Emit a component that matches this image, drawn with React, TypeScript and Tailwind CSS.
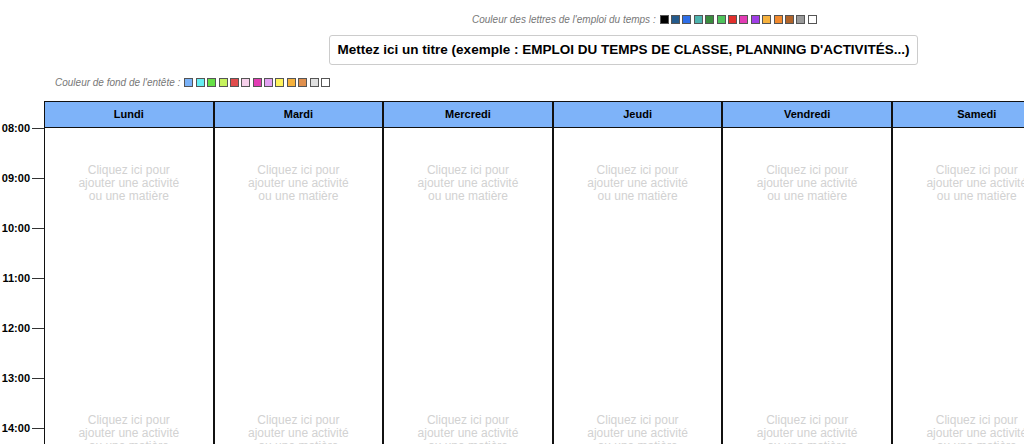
const letterColors = [
  '#000000', '#245a8c', '#2f6fe8', '#4db3ad', '#3a8c3e', '#4fc45c', '#e2302c',
  '#e23cb4', '#a03ee6', '#f6b23e', '#f28a2e', '#b0642a', '#9a9a9a', '#ffffff',
];

const headerColors = [
  '#7ab2f8', '#66eef2', '#66e046', '#c6f25e', '#e04c4c', '#f6d0ea', '#e23cb4',
  '#e2a2f2', '#fff45c', '#f6b23e', '#e0904e', '#e0e0e0', '#ffffff',
];

const days = ['Lundi', 'Mardi', 'Mercredi', 'Jeudi', 'Vendredi', 'Samedi'];
const hours = ['08:00', '09:00', '10:00', '11:00', '12:00', '13:00', '14:00', '15:00'];

function Swatches({ colors }: { colors: string[] }) {
  return (
    <div className="flex items-center gap-[2.4px]">
      {colors.map((c, i) => (
        <span
          key={i}
          className="block w-[9px] h-[9px] border border-[#555]"
          style={{ backgroundColor: c }}
        />
      ))}
    </div>
  );
}

function Placeholder() {
  return (
    <div className="h-[250px] pt-[36px] text-center text-[12px] leading-[13px] text-[#d2d2d2]">
      Cliquez ici pour
      <br />
      ajouter une activité
      <br />
      ou une matière
    </div>
  );
}

export default function App() {
  return (
    <div className="w-[1024px] h-[444px] overflow-hidden bg-white font-['Liberation_Sans',Arial,sans-serif]">
      <div className="flex items-center pt-[13px] pl-[472px] h-[26px]">
        <span className="italic text-[10px] text-[#777] mr-[4px] whitespace-nowrap">
          Couleur des lettres de l'emploi du temps :
        </span>
        <Swatches colors={letterColors} />
      </div>

      <div className="pl-[329px] pt-[9px]">
        <div className="w-[589px] h-[30px] flex items-center justify-center border border-[#ccc] rounded-[3px] text-[13.5px] font-bold text-black whitespace-nowrap">
          Mettez ici un titre (exemple : EMPLOI DU TEMPS DE CLASSE, PLANNING D'ACTIVITÉS...)
        </div>
      </div>

      <div className="flex items-center pl-[55px] pt-[9px] h-[26px]">
        <span className="italic text-[10px] text-[#777] mr-[4px] whitespace-nowrap">
          Couleur de fond de l'entête :
        </span>
        <Swatches colors={headerColors} />
      </div>

      <div className="flex mt-[10px]">
        <div className="w-[44px] shrink-0 pt-[27px]">
          {hours.map((h) => (
            <div key={h} className="h-[50px]">
              <div className="h-[14px] -translate-y-1/2 flex items-center justify-end">
                <span className="text-[11px] font-bold text-black">{h}</span>
                <span className="ml-[2px] w-[12px] h-px bg-[#333]" />
              </div>
            </div>
          ))}
        </div>

        {days.map((d) => (
          <div key={d} className="w-[169.6px] shrink-0 border-x border-[#111]">
            <div className="h-[27px] flex items-center justify-center bg-[#7eb3f9] border-y border-[#111] text-[11px] font-bold text-black">
              {d}
            </div>
            <Placeholder />
            <Placeholder />
          </div>
        ))}
      </div>
    </div>
  );
}
